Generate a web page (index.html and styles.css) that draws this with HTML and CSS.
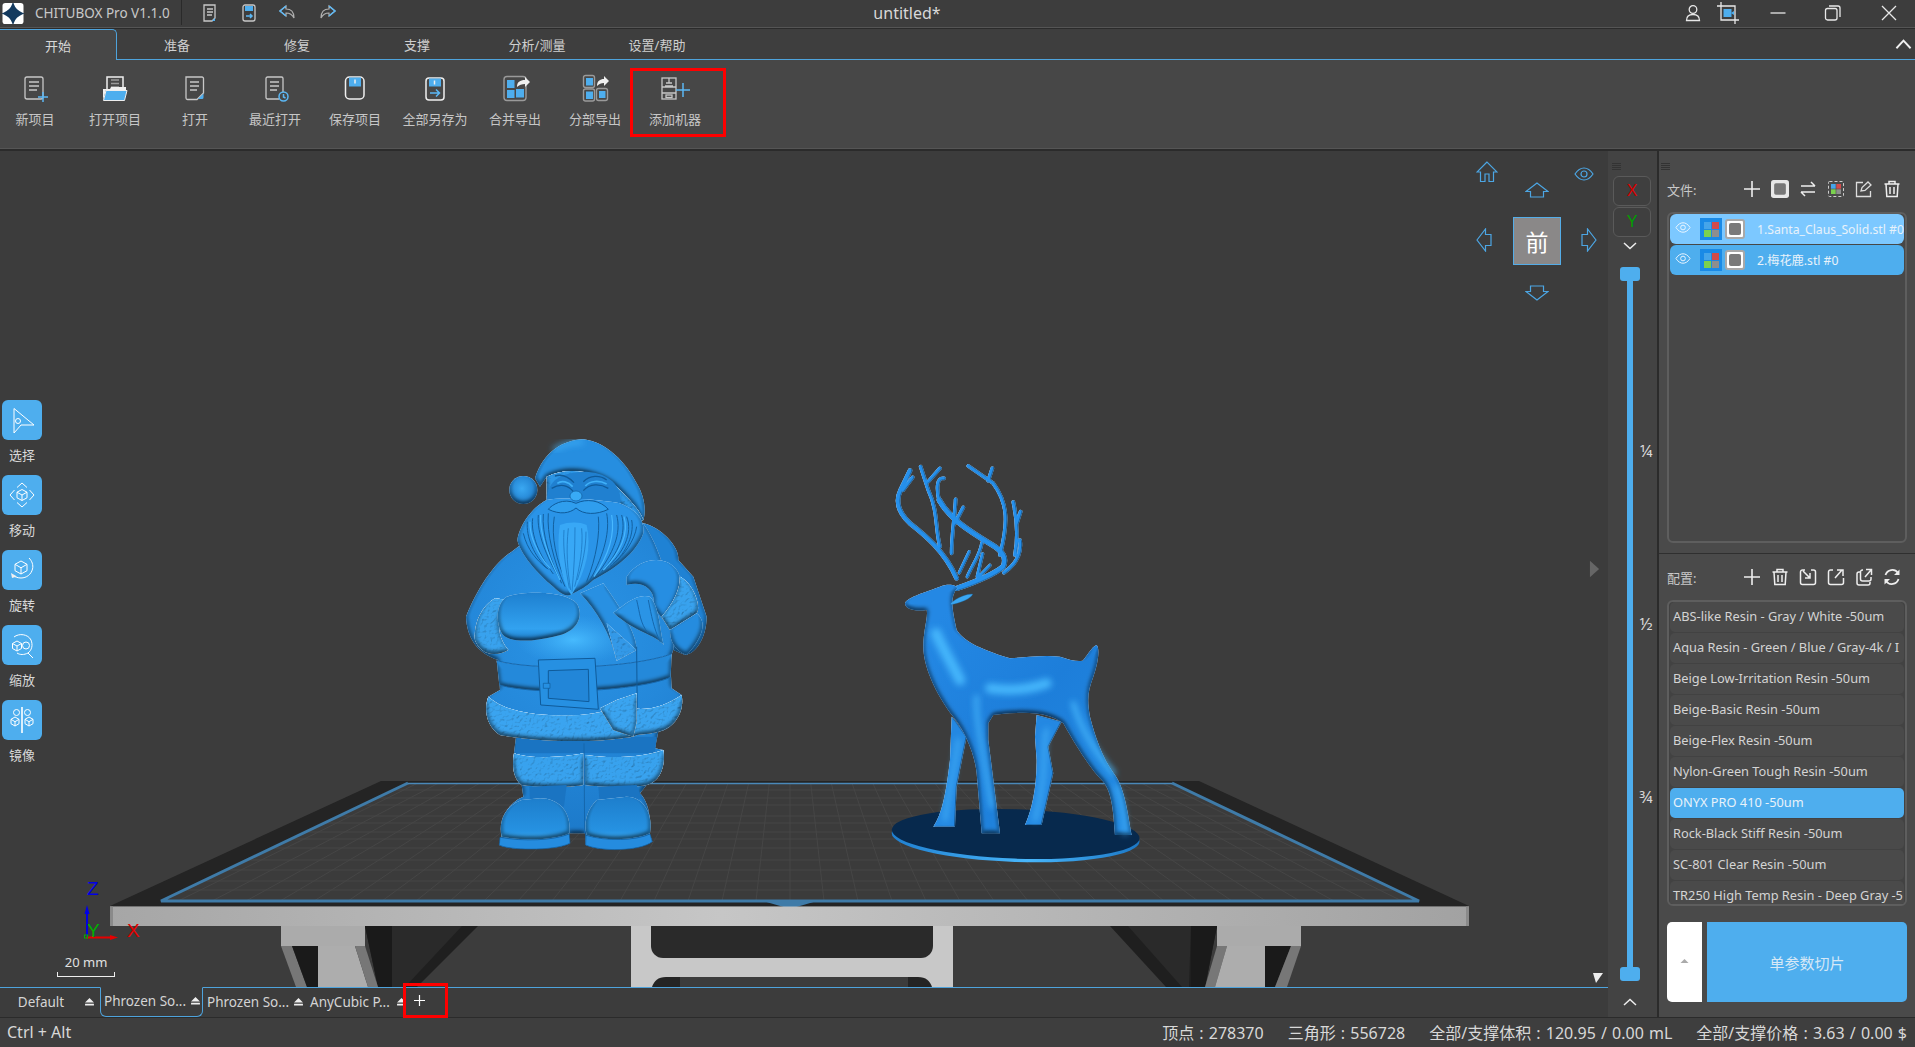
FILE: index.html
```html
<!DOCTYPE html>
<html lang="zh">
<head>
<meta charset="utf-8">
<title>CHITUBOX Pro</title>
<link rel="stylesheet" href="styles.css">
</head>
<body>
<svg class="defs" width="0" height="0" aria-hidden="true">
  <defs>
    <symbol id="eye" viewBox="0 0 20 14"><path d="M1 7C4 2.500 7 1 10 1s6 1.500 9 6c-3 4.500-6 6-9 6S4 11.500 1 7z" fill="none" stroke="currentColor" stroke-width="1.200"/><circle cx="10" cy="7" r="3" fill="none" stroke="currentColor" stroke-width="1.200"/></symbol>
    <symbol id="plus" viewBox="0 0 18 18"><path d="M9 1v16M1 9h16" fill="none" stroke="currentColor" stroke-width="1.600"/></symbol>
    <symbol id="trash" viewBox="0 0 18 18"><path d="M1.500 4h15M6 4V1.500h6V4M3 4l.8 12.500h10.400L15 4M7 7v7M11 7v7" fill="none" stroke="currentColor" stroke-width="1.500"/></symbol>
    <symbol id="eject" viewBox="0 0 10 9"><path d="M5 0l5 5H0zM0 6.500h10V8.500H0z" fill="currentColor"/></symbol>
    <symbol id="tiles" viewBox="0 0 16 16"><rect x="0" y="0" width="7.500" height="7.500" fill="#45a5ea"/><rect x="8.500" y="0" width="7.500" height="7.500" fill="#d24a4a"/><rect x="0" y="8.500" width="7.500" height="7.500" fill="#7bd14f"/><rect x="8.500" y="8.500" width="7.500" height="7.500" fill="#8e8e8e"/></symbol>
    <linearGradient id="bar" x1="0" x2="1" y1="0" y2="0"><stop offset="0" stop-color="#a6a6a6"/><stop offset=".45" stop-color="#c6c6c6"/><stop offset="1" stop-color="#a2a2a2"/></linearGradient>
    <radialGradient id="santa" gradientUnits="userSpaceOnUse" cx="400" cy="640" r="620"><stop offset="0" stop-color="#2a94e6"/><stop offset=".5" stop-color="#2488da"/><stop offset="1" stop-color="#1c79c9"/></radialGradient>
    <radialGradient id="glow" cx=".5" cy=".5" r=".5"><stop offset="0" stop-color="#48bcff" stop-opacity=".95"/><stop offset="1" stop-color="#3aa8f2" stop-opacity="0"/></radialGradient>
    <radialGradient id="ball" cx=".45" cy=".45" r=".6"><stop offset="0" stop-color="#3aa8f2"/><stop offset="1" stop-color="#1c79c9"/></radialGradient>
    <linearGradient id="mitt" x1="0" x2="0" y1="0" y2="1"><stop offset="0" stop-color="#1e80d0"/><stop offset=".75" stop-color="#32a2f0"/><stop offset="1" stop-color="#1c7cca"/></linearGradient>
    <linearGradient id="boot" x1="0" x2="0" y1="0" y2="1"><stop offset="0" stop-color="#1d7ecc"/><stop offset=".8" stop-color="#2692e2"/><stop offset="1" stop-color="#38aaf6"/></linearGradient>
    <linearGradient id="deer" gradientUnits="userSpaceOnUse" x1="180" y1="600" x2="760" y2="1100"><stop offset="0" stop-color="#2488e4"/><stop offset=".5" stop-color="#1d7eda"/><stop offset="1" stop-color="#2288e0"/></linearGradient>
    <linearGradient id="rim" x1="0" x2="1" y1="0" y2="0"><stop offset="0" stop-color="#2080d0"/><stop offset=".55" stop-color="#48b6fb"/><stop offset="1" stop-color="#1c78c6"/></linearGradient>
    <filter id="soft" x="-30%" y="-30%" width="160%" height="160%"><feGaussianBlur stdDeviation="10"/></filter>
    <filter id="puff" x="-5%" y="-5%" width="110%" height="110%" color-interpolation-filters="sRGB">
      <feGaussianBlur in="SourceAlpha" stdDeviation="8" result="b"/>
      <feDiffuseLighting in="b" surfaceScale="9" diffuseConstant="1.064" lighting-color="#fff" result="d"><feDistantLight azimuth="270" elevation="70"/></feDiffuseLighting>
      <feComposite in="d" in2="SourceAlpha" operator="in" result="d2"/>
      <feBlend in="SourceGraphic" in2="d2" mode="multiply"/>
    </filter>
    <filter id="puffs" x="-5%" y="-5%" width="110%" height="110%" color-interpolation-filters="sRGB">
      <feGaussianBlur in="SourceAlpha" stdDeviation="2" result="b"/>
      <feDiffuseLighting in="b" surfaceScale="2" diffuseConstant="1.064" lighting-color="#fff" result="d"><feDistantLight azimuth="200" elevation="70"/></feDiffuseLighting>
      <feComposite in="d" in2="SourceAlpha" operator="in" result="d2"/>
      <feBlend in="SourceGraphic" in2="d2" mode="multiply"/>
    </filter>
    <filter id="fur" x="0" y="0" width="100%" height="100%" color-interpolation-filters="sRGB"><feTurbulence type="fractalNoise" baseFrequency=".11" numOctaves="3" seed="4" result="n"/><feDiffuseLighting in="n" surfaceScale="2.400" lighting-color="#fff" diffuseConstant="1.150" result="l"><feDistantLight azimuth="235" elevation="62"/></feDiffuseLighting><feComposite in="l" in2="SourceAlpha" operator="in" result="t"/><feBlend in="SourceGraphic" in2="t" mode="multiply"/></filter>
    <clipPath id="bedclip"><polygon points="408,783 1172,783 1419,901 161,901"/></clipPath>
  </defs>
</svg>

<div class="app">
  <header class="titlebar">
    <svg class="logo" viewBox="0 0 22 22"><rect width="22" height="22" rx="3" fill="#fff"/><path d="M11 1.500C12.500 6 16 9 20.500 11 16 13 12.500 16 11 20.500 9.500 16 6 13 1.500 11 6 9 9.500 6 11 1.500z" fill="#143a5e" stroke="#143a5e" stroke-width="2"/></svg>
    <span class="appname">CHITUBOX Pro V1.1.0</span>
    <span class="title-sep"></span>
    <div class="quick">
      <svg class="quick-ic" viewBox="0 0 20 20"><path d="M4 2h11v13l-3 3H4z" class="ln"/><path d="M7 6h6M7 9h6M7 12h5" class="ln"/><path d="M12 18l3-3v3z" class="fb"/></svg>
      <svg class="quick-ic" viewBox="0 0 20 20"><rect x="4" y="2" width="12" height="16" rx="2" class="ln"/><rect x="6" y="3" width="8" height="5" class="fb"/><path d="M7 13h6M11 11l2 2-2 2" class="lb"/></svg>
      <svg class="quick-ic" viewBox="0 0 20 20"><path d="M8 3L2 8l6 5V10c4 0 6 1 8 5 0-6-3-9-8-9z" class="lg"/><path d="M8 3L2 8l6 5" class="lb"/></svg>
      <svg class="quick-ic" viewBox="0 0 20 20"><path d="M12 3l6 5-6 5V10c-4 0-6 1-8 5 0-6 3-9 8-9z" class="lg"/><path d="M12 3l6 5-6 5" class="lb"/></svg>
    </div>
    <div class="doc-title">untitled*</div>
    <div class="window-ctl">
      <svg class="win-ic user" viewBox="0 0 18 18"><circle cx="9" cy="5.500" r="3.800" class="ln"/><path d="M2.500 16.500c0-4 2.500-6 6.500-6s6.500 2 6.500 6z" class="ln"/></svg>
      <svg class="win-ic crop" viewBox="0 0 24 24"><path d="M5 1v18h18M1 5h18v18" class="ln"/><rect x="7.500" y="8" width="8" height="8" class="fb"/><path d="M15 12l3-2v4z" class="fb"/></svg>
      <svg class="win-ic min" viewBox="0 0 18 18"><path d="M1.500 9h15" class="ln"/></svg>
      <svg class="win-ic restore" viewBox="0 0 18 18"><rect x="1.500" y="4.500" width="11.500" height="11.500" rx="2" class="ln"/><path d="M5 2h9a2 2 0 0 1 2 2v9" class="ln"/></svg>
      <svg class="win-ic close" viewBox="0 0 18 18"><path d="M2 2l14 14M16 2L2 16" class="ln"/></svg>
    </div>
  </header>

  <nav class="tabs">
    <div class="tab tab-active">开始</div>
    <div class="tab">准备</div>
    <div class="tab">修复</div>
    <div class="tab">支撑</div>
    <div class="tab">分析/测量</div>
    <div class="tab">设置/帮助</div>
    <svg class="tabs-collapse" viewBox="0 0 18 12"><path d="M1.500 10.500L9 2.500l7.500 8" class="ln-w"/></svg>
  </nav>

  <section class="ribbon">
    <div class="rb">
      <svg class="rb-ic" viewBox="0 0 36 30"><rect x="8" y="3" width="18" height="22" rx="2" class="ln"/><path d="M12 8h10M12 12h10M12 16h8" class="ln"/><path d="M26 18v10M21 23h10" class="lb"/></svg>
      <span class="rb-label">新项目</span>
    </div>
    <div class="rb">
      <svg class="rb-ic" viewBox="0 0 36 30"><path d="M10 15V3h16v12" class="lw"/><path d="M14 6h8M14 9.500h8M14 13h8" class="lg2"/><path d="M6 15h7l1-2h15v3H9L6 26z" class="fw"/><path d="M9 16.500h21l-2.500 10H6.500z" class="fbw"/></svg>
      <span class="rb-label">打开项目</span>
    </div>
    <div class="rb">
      <svg class="rb-ic" viewBox="0 0 36 30"><path d="M9 3h16a1.500 1.500 0 0 1 1.500 1.500V19L20 25.500H10.500A1.500 1.500 0 0 1 9 24z" class="ln"/><path d="M13 8h9M13 12h9M13 16h7" class="ln"/><path d="M21 25l5.500-5.500v4a1.500 1.500 0 0 1-1.500 1.500z" class="fb"/></svg>
      <span class="rb-label">打开</span>
    </div>
    <div class="rb">
      <svg class="rb-ic" viewBox="0 0 36 30"><path d="M22 25H10.500A1.500 1.500 0 0 1 9 23.500v-19A1.500 1.500 0 0 1 10.500 3h14A1.500 1.500 0 0 1 26 4.500V18" class="ln"/><path d="M13 8h9M13 12h9M13 16h7" class="ln"/><circle cx="26.500" cy="22.500" r="4.500" class="lb"/><path d="M26.500 20v3l2 1" class="lb"/></svg>
      <span class="rb-label">最近打开</span>
    </div>
    <div class="rb">
      <svg class="rb-ic" viewBox="0 0 36 30"><rect x="8.500" y="3" width="18.500" height="22" rx="4" class="lw"/><rect x="12" y="3.500" width="12" height="9" class="fb"/><path d="M18 5.500v4" class="lw"/></svg>
      <span class="rb-label">保存项目</span>
    </div>
    <div class="rb">
      <svg class="rb-ic" viewBox="0 0 36 30"><rect x="9" y="4" width="18" height="22" rx="3" class="lw"/><rect x="12" y="4.500" width="12" height="8" class="fb"/><path d="M17.500 6.500v4" class="lw"/><path d="M13 19h9M19 15.500l3.500 3.500-3.500 3.500" class="lb"/></svg>
      <span class="rb-label">全部另存为</span>
    </div>
    <div class="rb">
      <svg class="rb-ic" viewBox="0 0 36 30"><rect x="7" y="2.500" width="22" height="24" rx="3" class="lg2"/><rect x="10" y="6" width="7.500" height="8" class="fb"/><rect x="10" y="16" width="7.500" height="8" class="fb"/><rect x="19" y="15" width="8" height="8.500" class="fb"/><path d="M20 13c0-5 3-7 8-7V3l5 5-5 5v-3c-3 0-6 1-8 3z" class="fw"/></svg>
      <span class="rb-label">合并导出</span>
    </div>
    <div class="rb">
      <svg class="rb-ic" viewBox="0 0 36 30"><rect x="6.500" y="1.500" width="11" height="12" rx="2" class="lg2"/><rect x="9" y="4" width="7" height="7.500" class="fb"/><rect x="6.500" y="15" width="11" height="12" rx="2" class="lg2"/><rect x="9" y="17.500" width="7" height="7.500" class="fb"/><rect x="19.500" y="14.500" width="11" height="12" rx="2" class="lg2"/><rect x="22" y="17" width="6.500" height="7" class="fb"/><path d="M20 12c0-5 3-7 7-7V2l5 5-5 5V9c-3 0-5 1-7 3z" class="fw"/></svg>
      <span class="rb-label">分部导出</span>
    </div>
    <div class="rb rb-marked">
      <svg class="rb-ic" viewBox="0 0 36 30"><rect x="5" y="4" width="14" height="21" class="ln"/><path d="M5 13h14M5 19h14M12 4v5M8 12h8M9 9h6" class="ln"/><rect x="9" y="21" width="6" height="2.500" class="ln"/><path d="M26 9v14M19 16h14" class="lb"/></svg>
      <span class="rb-label">添加机器</span>
    </div>
  </section>

  <main class="main">
    <div class="scene-col">
      <div class="viewport">
        <svg class="scene" viewBox="0 151 1608 836">
          <!-- build plate -->
          <polygon points="110,906 381,781 1199,781 1469,906" fill="#242424"/>
          <polygon points="408,783 1172,783 1419,901 161,901" fill="#3b3b3b"/>
          <g clip-path="url(#bedclip)" class="gridlines">
            <path d="M790 783v118M810.700 783l13.300 118M769.300 783l-13.300 118M831.300 783l26.700 118M748.700 783l-26.700 118M852 783l40 118M728 783l-40 118M872.700 783l53.300 118M707.300 783l-53.300 118M893.300 783l66.700 118M686.700 783l-66.700 118M914 783l80 118M666 783l-80 118M934.700 783l93.300 118M645.300 783l-93.300 118M955.300 783l106.700 118M624.700 783l-106.700 118M976 783l120 118M604 783l-120 118M996.700 783l133.300 118M583.300 783l-133.300 118M1017.300 783l146.700 118M562.700 783l-146.700 118M1038 783l160 118M542 783l-160 118M1058.700 783l173.300 118M521.300 783l-173.300 118M1079.300 783l186.700 118M500.700 783l-186.700 118M1100 783l200 118M480 783l-200 118M1120.700 783l213.300 118M459.300 783l-213.300 118M1141.300 783l226.700 118M438.700 783l-226.700 118M1162 783l240 118M418 783l-240 118"/>
            <path d="M100 790h1400M100 798h1400M100 805h1400M100 816h1400M100 823h1400M100 832h1400M100 839h1400M100 848h1400M100 860h1400M100 870h1400M100 881h1400M100 890h1400"/>
          </g>
          <path d="M1172 783L1419 901H161L408 783" fill="none" stroke="#3f7ba8" stroke-width="3"/>
          <path d="M408 783.500H1172" fill="none" stroke="#4a88b8" stroke-width="1.500"/>
          <polygon points="763,901 817,901 793,908 787,908" fill="#3f7ba8"/>
          <!-- supports -->
          <polygon points="365,926 478,926 417,987 378,987" fill="#1f1f1f"/>
          <polygon points="392,926 462,926 405,987 392,987" fill="#2a2a2a"/>
          <polygon points="1110,926 1217,926 1205,987 1166,987" fill="#1f1f1f"/>
          <polygon points="1128,926 1191,926 1189,987 1182,987" fill="#2a2a2a"/>
          <polygon points="1191,926 1217,926 1205,987 1191,987" fill="#1a1a1a"/>
          <polygon points="365,926 392,926 392,987 378,987" fill="#1a1a1a"/>
          <g>
            <rect x="281" y="926" width="84" height="20" fill="#ababab"/>
            <polygon points="281,946 292,946 307,987 296,987" fill="#777"/>
            <polygon points="292,946 318,946 318,987 307,987" fill="#1a1a1a"/>
            <polygon points="318,946 355,946 368,987 318,987" fill="#adadad"/>
            <polygon points="355,946 365,946 378,987 368,987" fill="#777"/>
          </g>
          <g>
            <rect x="1217" y="926" width="84" height="20" fill="#ababab"/>
            <polygon points="1217,946 1227,946 1215,987 1205,987" fill="#777"/>
            <polygon points="1227,946 1265,946 1265,987 1215,987" fill="#adadad"/>
            <polygon points="1265,946 1291,946 1275,987 1265,987" fill="#1a1a1a"/>
            <polygon points="1291,946 1301,946 1287,987 1275,987" fill="#777"/>
          </g>
          <rect x="631" y="926" width="322" height="61" fill="#c8c8c8"/>
          <path d="M651 926h282v20a12 12 0 0 1-12 12H663a12 12 0 0 1-12-12z" fill="#2a2a2a"/>
          <path d="M652 987c2-6 6-10 14-10h252c8 0 12 4 14 10z" fill="#242424"/>
          <rect x="680" y="977" width="228" height="10" fill="#3c3c3c"/>
          <rect x="110" y="906.500" width="1359" height="19.500" fill="url(#bar)"/>
          <rect x="110" y="906.500" width="3" height="19.500" fill="#8a8a8a"/>
          <rect x="1466" y="906.500" width="3" height="19.500" fill="#8a8a8a"/>

          <!-- santa -->
          <g transform="translate(440 420) scale(.3333)">
            <path d="M610 310C660 320 720 380 715 420L760 470 800 590C800 650 770 700 735 705L700 690z" fill="#1f82d4" filter="url(#puff)"/>
            <path d="M215 395C160 430 110 510 78 590 80 650 110 700 175 720L180 810 145 830C135 870 140 920 180 945L228 950 222 1000C215 1040 225 1085 245 1095L250 1130C200 1150 180 1200 185 1250L178 1275C200 1290 340 1295 390 1270L385 1240H435L437 1275C480 1295 600 1295 637 1265L628 1240C635 1180 620 1140 600 1120L620 1095C660 1085 675 1040 670 990L645 985 655 935C700 930 730 880 725 825L695 805 690 710C720 690 700 440 610 310L300 330z" fill="url(#santa)" filter="url(#puff)"/>
            <ellipse cx="400" cy="660" rx="170" ry="75" fill="url(#glow)"/>
            <path d="M230 950H650L645 1000H225z" fill="#1a74c2"/>
            <path d="M170 722C280 752 560 748 695 702L692 772C600 812 300 830 178 795z" fill="#2489da" filter="url(#puff)"/>
            <path d="M170 722C280 752 560 748 695 702M692 772C600 812 300 830 178 795" class="crease-lt"/>
            <path d="M420 520L490 490C540 560 590 640 590 690L530 722C510 640 470 570 420 520z" fill="#2890e2" filter="url(#puff)"/>
            <path d="M500 610L590 690 530 722z" fill="#3399e8" filter="url(#fur)"/>
            <path d="M590 680L592 905" class="crease"/>
            <path d="M295 720L465 715 475 868 302 855z" fill="#2690e2" stroke="#0f5a9a" stroke-width="3"/>
            <path d="M325 752L445 748 447 845 325 835z" fill="#2286d8" stroke="#0f5a9a" stroke-width="3"/>
            <path d="M310 790H330V805H310z" fill="#2690e2" stroke="#0f5a9a" stroke-width="2"/>
            <g filter="url(#puff)"><path d="M145 830C200 880 300 890 420 885 500 880 520 860 530 850 590 880 660 870 725 825 735 880 700 925 655 935 620 945 590 940 580 950 420 975 260 960 180 945 140 920 130 870 145 830z" fill="#3aa4f0" filter="url(#fur)"/></g>
            <g filter="url(#puff)"><path d="M480 865L530 840 590 820V905L580 950 520 930z" fill="#3aa4f0" filter="url(#fur)"/></g>
            <g filter="url(#puff)"><path d="M222 1000C280 1020 380 1010 430 1000V1095C360 1105 280 1100 245 1095 220 1075 215 1040 222 1000z" fill="#38a2ee" filter="url(#fur)"/></g>
            <g filter="url(#puff)"><path d="M435 1005C500 1015 600 1015 670 990 678 1040 660 1085 620 1095 560 1105 480 1100 435 1095z" fill="#38a2ee" filter="url(#fur)"/></g>
            <path d="M432 970L434 1240" class="crease-lt"/>
            <path d="M268 1100L380 1095 372 1160 270 1150z" fill="#1a74c2"/>
            <path d="M475 1100L590 1095 605 1135 480 1160z" fill="#1a74c2"/>
            <path d="M245 1140C190 1160 175 1210 185 1250 250 1262 340 1262 388 1240 395 1180 360 1135 300 1135z" fill="url(#boot)" filter="url(#puff)"/>
            <path d="M470 1140C440 1170 430 1210 440 1245 500 1265 590 1260 630 1240 640 1180 610 1130 560 1130z" fill="url(#boot)" filter="url(#puff)"/>
            <path d="M180 1252C250 1265 340 1262 388 1242L390 1270C340 1295 200 1290 178 1275z" fill="#258cdf" stroke="#0f5a9a" stroke-width="2"/>
            <path d="M438 1246C500 1265 590 1262 630 1242L637 1265C600 1295 480 1295 437 1275z" fill="#258cdf" stroke="#0f5a9a" stroke-width="2"/>
            <g filter="url(#puff)"><path d="M165 535C120 560 100 620 105 660 120 700 160 715 205 690 170 650 165 590 205 540z" fill="#38a2ee" filter="url(#fur)"/></g>
            <path d="M200 530C260 510 380 515 410 550 435 590 410 640 340 650 280 665 205 670 185 640 165 600 170 550 200 530z" fill="url(#mitt)" filter="url(#puff)"/>
            <path d="M560 470C600 410 680 405 710 450 740 490 700 560 670 600L640 560C650 510 610 480 560 495z" fill="#268ee2" filter="url(#puff)"/>
            <g filter="url(#puff)"><path d="M720 470C760 490 785 560 770 580L690 630 665 590C700 550 720 510 720 470z" fill="#38a2ee" filter="url(#fur)"/></g>
            <path d="M690 630L770 580C795 600 800 640 740 705 700 690 690 660 690 630z" fill="#258cdf" filter="url(#puff)"/>
            <path d="M520 578C560 550 590 520 630 530 660 560 660 640 672 675 640 640 590 640 520 578z" fill="#2a94e6" filter="url(#puff)"/>
            <path d="M590 540C600 580 600 610 625 640M625 540C635 590 640 620 660 665" class="crease-lt"/>
            <path d="M285 175C310 95 370 60 430 58 500 65 560 130 590 190 612 225 620 270 610 300 590 260 560 230 530 200 470 150 380 140 320 170L300 200z" fill="#268ee0" filter="url(#puff)"/>
            <g filter="url(#puff)"><path d="M320 170C380 140 470 150 530 200 570 240 600 270 610 300L590 310 540 250H320z" fill="#2c96e6" filter="url(#fur)"/></g>
            <path d="M340 90C370 72 400 66 430 66" fill="none" stroke="#3fb0f8" stroke-width="10" filter="url(#soft)"/>
            <circle cx="250" cy="210" r="42" fill="url(#ball)" filter="url(#puff)"/>
            <path d="M320 245C320 170 380 155 440 155 520 160 550 210 540 260 500 290 360 290 320 245z" fill="#2080d0"/>
            <path d="M335 205C360 190 385 195 400 215M430 212C450 190 480 190 505 205M345 168C365 162 385 170 402 188M430 185C450 165 480 165 500 180" class="crease-th"/>
            <path d="M352 190C365 180 385 185 398 200M436 198C450 182 478 180 500 192" class="hl"/>
            <path d="M320 240C280 260 240 310 232 360 240 400 290 460 340 500 360 520 380 530 390 525 420 510 440 500 460 480 520 450 590 400 610 340 615 300 590 270 540 250 480 240 380 230 320 240z" fill="#2a94e8" filter="url(#puff)"/>
            <path d="M262 305C258 350 282 410 325 448M278 295C272 345 298 405 340 462M295 285C290 340 320 410 355 470M310 282C305 340 330 420 365 490M325 280C320 340 340 420 375 500M343 290C333 350 348 420 380 490M530 285C545 340 520 400 470 465M545 285C560 340 535 400 485 455M560 290C580 340 550 400 498 445M575 300C585 350 550 410 510 440M590 320C585 360 550 410 520 430M500 280C510 330 495 400 450 480M475 290C480 340 470 410 440 485M250 340C262 390 290 420 320 445" class="strand"/>
            <path d="M270 305C268 345 290 400 330 445M302 285C298 340 325 410 360 480M552 290C568 340 540 400 490 450M515 285C525 340 510 400 462 470" class="strand-hl"/>
            <path d="M408 250C370 232 335 255 325 268 360 285 390 280 408 264 430 285 470 285 505 268 480 240 440 235 408 250z" fill="#2f9eee" stroke="#0f5a9a" stroke-width="3"/>
            <ellipse cx="408" cy="228" rx="18" ry="15" fill="#38aaf6" stroke="#0f5a9a" stroke-width="2"/>
            <path d="M360 315C385 305 420 305 440 315 455 380 440 450 395 525 370 500 345 400 360 315z" fill="#38a8f6"/>
            <path d="M372 330C368 390 378 450 388 505M385 325C378 390 382 450 392 510M405 322C405 390 402 450 396 515M425 325C430 380 420 440 404 500M438 335C438 385 428 430 412 480" class="strand-lt"/>
          </g>

          <!-- deer -->
          <g transform="translate(860 440) scale(.3333)">
            <ellipse cx="467" cy="1192" rx="372" ry="74" fill="url(#rim)" transform="rotate(2 467 1192)"/>
            <ellipse cx="467" cy="1182" rx="372" ry="74" fill="#07294d" transform="rotate(2 467 1182)"/>
            <g class="antler" filter="url(#puffs)">
              <path d="M290 415C255 335 195 285 150 250 118 220 105 185 122 150L150 92" stroke-width="14"/>
              <path d="M130 150L158 112M240 320C225 260 235 215 205 150L182 80M205 125L240 85M238 185C228 140 232 112 252 115M275 340C275 280 285 230 287 178M285 250L310 202" stroke-width="11"/>
              <path d="M292 445C350 425 400 405 430 380 442 350 425 335 405 320 340 280 270 240 238 180" stroke-width="16"/>
              <path d="M420 345C445 250 445 190 400 130L325 78M385 122L397 85M432 398C470 372 486 340 480 300M465 345C476 285 472 240 460 186M471 250L482 215" stroke-width="11"/>
              <path d="M298 398L328 335M322 410C340 370 360 345 366 308M352 410L368 342M355 412L390 376" stroke-width="10"/>
            </g>
            <path d="M285 840L320 890 290 1040 285 1160H220C240 1130 255 1090 270 960L275 830z" fill="#2488e2" filter="url(#puffs)"/>
            <path d="M530 825L605 845 565 920 580 1000 545 1155H495C515 1110 530 1050 530 960L525 890z" fill="#2488e2" filter="url(#puffs)"/>
            <path d="M135 490C140 475 170 465 240 440 265 430 290 435 292 445 270 470 275 500 290 570 310 600 350 625 450 655 510 650 560 645 600 650 630 660 650 665 668 662 680 650 695 620 710 615 720 625 715 670 700 710 685 750 680 775 690 830 705 890 730 960 765 1005 795 1045 805 1130 815 1185H765C760 1110 755 1050 725 1020 690 985 640 905 610 850 570 820 510 810 400 825L385 850 385 900 420 1180H365L350 1000C345 950 320 880 280 830 240 780 190 690 190 620 190 570 205 530 200 510 170 515 135 510 135 490z" fill="url(#deer)" filter="url(#puff)"/>
            <path d="M272 490C295 470 320 462 338 462 335 475 300 490 272 494z" fill="#3aa7f2" stroke="#1468aa" stroke-width="1"/>
            <g filter="url(#soft)" class="shine">
              <path d="M228 580C245 620 275 670 300 720" stroke-width="32"/>
              <path d="M390 745C440 752 500 752 560 730" stroke-width="30"/>
              <path d="M640 790C660 860 700 930 760 1000" stroke-width="14"/>
              <path d="M350 770C345 810 360 900 395 1100" stroke-width="12"/>
              <path d="M295 900C285 980 265 1060 255 1140" stroke-width="10"/>
              <path d="M560 870C545 920 565 1000 525 1140" stroke-width="10"/>
              <path d="M770 1040C790 1100 795 1140 795 1180" stroke-width="10"/>
            </g>
          </g>
        </svg>

        <div class="tools">
          <div class="tool">
            <div class="tool-btn"><svg viewBox="0 0 28 28" class="tool-ic"><path d="M6 2.500L26 19H13L6 27z" class="lw1"/><circle cx="10" cy="15" r="2.500" class="lw1"/></svg></div>
            <span class="tool-label">选择</span>
          </div>
          <div class="tool">
            <div class="tool-btn"><svg viewBox="0 0 28 28" class="tool-ic"><path d="M14 2l5 4.500M14 2L9 6.500M14 26l5-4.500M14 26l-5-4.500M2 14l4.500-5M2 14l4.500 5M26 14l-4.500-5M26 14l-4.500 5" class="lw1"/><path d="M14 8.500l5 2.700v5.600l-5 2.700-5-2.700v-5.600zM9 11.200l5 2.800 5-2.800M14 14v5.500" class="lw1"/></svg></div>
            <span class="tool-label">移动</span>
          </div>
          <div class="tool">
            <div class="tool-btn"><svg viewBox="0 0 28 28" class="tool-ic"><path d="M13 5l6 3.300v6.400l-6 3.300-6-3.300V8.300zM7 8.300l6 3.500 6-3.500M13 11.800V18" class="lw1"/><path d="M21 2c3 3 4.500 7 3.500 11-1.300 5.500-6 9-11.500 9-3 0-6-1-8-2.500" class="lw1"/><path d="M3 17l1 5 5-1.500z" class="fw"/></svg></div>
            <span class="tool-label">旋转</span>
          </div>
          <div class="tool">
            <div class="tool-btn"><svg viewBox="0 0 28 28" class="tool-ic"><path d="M9 10l4.500 2.500v5L9 20l-4.500-2.500v-5zM4.500 12.500L9 15l4.500-2.500M9 15v5" class="lw1"/><circle cx="18" cy="14.500" r="3.500" class="lw1"/><path d="M6 6c5-4 14-3 17 3 2 5 1 10-3 13-4 2-8 2-11 0M20 22l5 5" class="lw1"/></svg></div>
            <span class="tool-label">缩放</span>
          </div>
          <div class="tool">
            <div class="tool-btn"><svg viewBox="0 0 28 28" class="tool-ic"><path d="M14 1v26" class="lw2"/><path d="M7 11l4 2.300v4.400L7 20l-4-2.300v-4.400zM21 11l4 2.300v4.400L21 20l-4-2.300v-4.400zM3 13.300L7 15.700l4-2.400M17 13.300l4 2.400 4-2.400M7 15.700V20M21 15.700V20" class="lw1"/><circle cx="8.500" cy="6.500" r="3" class="lw1"/><circle cx="19.500" cy="6.500" r="3" class="lw1"/></svg></div>
            <span class="tool-label">镜像</span>
          </div>
        </div>

        <svg class="axes" viewBox="0 0 100 70">
          <path d="M37 28v27" stroke="#0000e6" stroke-width="2" fill="none"/>
          <path d="M37 22l-2.500 9h5z" fill="#0000e6"/>
          <path d="M36 54.500h28" stroke="#e60000" stroke-width="2" fill="none"/>
          <path d="M68 54.500l-8-2.500v5z" fill="#e60000"/>
          <rect x="34.500" y="52" width="3" height="3" fill="none" stroke="#00b000"/>
          <text x="37" y="12" class="ax-z">Z</text>
          <text x="37" y="54" class="ax-y">Y</text>
          <text x="77" y="54" class="ax-x">X</text>
        </svg>
        <div class="scale">
          <span class="scale-text">20 mm</span>
          <span class="scale-bar"></span>
        </div>

        <div class="navcube">
          <svg class="nav-a nav-home" viewBox="0 0 22 22"><path d="M11 1L1 11h3.500v9.500h4.500V13h4v7.500h4.500V11H21z" class="lb1"/></svg>
          <svg class="nav-a nav-up" viewBox="0 0 24 16"><path d="M12 1L1 9.500h4.500V15h13V9.500H23z" class="lb1"/></svg>
          <svg class="nav-a nav-eye" viewBox="0 0 20 14"><use href="#eye"/></svg>
          <svg class="nav-a nav-left" viewBox="0 0 16 24"><path d="M1 12L9.500 1v5.500H15v11H9.500V23z" class="lb1"/></svg>
          <div class="nav-front">前</div>
          <svg class="nav-a nav-right" viewBox="0 0 16 24"><path d="M15 12L6.500 1v5.500H1v11h5.500V23z" class="lb1"/></svg>
          <svg class="nav-a nav-down" viewBox="0 0 24 16"><path d="M12 15L1 6.500h4.500V1h13v5.500H23z" class="lb1"/></svg>
        </div>

        <svg class="side-arrow" viewBox="0 0 12 20"><path d="M1 1l10 9-10 9z"/></svg>
        <svg class="corner-arrow" viewBox="0 0 10 10"><path d="M0 0h10L3 10z"/></svg>
      </div>

      <div class="doc-tabs">
        <div class="doc-tab doc-first"><span class="doc-name">Default</span><svg class="ej" viewBox="0 0 10 9"><use href="#eject"/></svg></div>
        <div class="doc-tab doc-active"><span class="doc-name">Phrozen So...</span><svg class="ej" viewBox="0 0 10 9"><use href="#eject"/></svg></div>
        <div class="doc-tab"><span class="doc-name">Phrozen So...</span><svg class="ej" viewBox="0 0 10 9"><use href="#eject"/></svg></div>
        <div class="doc-tab"><span class="doc-name">AnyCubic P...</span><svg class="ej" viewBox="0 0 10 9"><use href="#eject"/></svg></div>
        <div class="doc-add"><svg class="doc-plus" viewBox="0 0 12 12"><path d="M6 0v12M0 6h12" stroke="#fff" stroke-width="1.300" fill="none"/></svg></div>
      </div>
    </div>

    <aside class="slider-panel">
      <svg class="grip" viewBox="0 0 11 7"><path d="M0 .500h9M0 2.500h9M0 4.500h9M0 6.500h9" stroke="#333" stroke-width="1"/></svg>
      <button class="axis-btn axis-x">X</button>
      <button class="axis-btn axis-y">Y</button>
      <svg class="chev" viewBox="0 0 14 8"><path d="M1 1l6 5.500L13 1" class="ln-w1"/></svg>
      <div class="slider">
        <span class="handle"></span>
        <span class="track"></span>
        <span class="handle"></span>
        <span class="frac frac-1">¼</span>
        <span class="frac frac-2">½</span>
        <span class="frac frac-3">¾</span>
      </div>
      <svg class="chev chev-up" viewBox="0 0 14 8"><path d="M1 7L7 1.500 13 7" class="ln-w1"/></svg>
    </aside>

    <aside class="right-panel">
      <svg class="grip grip-r" viewBox="0 0 11 7"><path d="M0 .500h9M0 2.500h9M0 4.500h9M0 6.500h9" stroke="#333" stroke-width="1"/></svg>
      <div class="panel-head">
        <span class="panel-title">文件:</span>
        <div class="panel-icons">
          <svg class="pi" viewBox="0 0 18 18"><use href="#plus"/></svg>
          <svg class="pi" viewBox="0 0 20 20"><rect x="0" y="0" width="20" height="20" rx="3" fill="#e8e8e8"/><rect x="3.500" y="3.500" width="13" height="13" rx="2" fill="#777"/></svg>
          <svg class="pi" viewBox="0 0 18 18"><path d="M2 6h14M12 2l4 4M16 12H2M6 16l-4-4" class="ln-w1"/></svg>
          <svg class="pi" viewBox="0 0 18 18"><rect x="1.500" y="1.500" width="15" height="15" rx="1" fill="none" stroke="#ccc" stroke-dasharray="3 2"/><use href="#tiles" x="4" y="4" width="10" height="10"/></svg>
          <svg class="pi" viewBox="0 0 18 18"><path d="M15.500 11v5.500h-14v-14H8" fill="none" stroke="#ddd" stroke-width="1.300"/><path d="M6 11l1-3.500L13 2l3 3-6 5.500z" fill="none" stroke="#ddd" stroke-width="1.300"/></svg>
          <svg class="pi" viewBox="0 0 18 18"><use href="#trash"/></svg>
        </div>
      </div>
      <div class="file-list">
        <div class="file-row file-row-light">
          <svg class="file-eye" viewBox="0 0 20 14"><use href="#eye"/></svg>
          <span class="tile"><svg class="tile-ic" viewBox="0 0 16 16"><use href="#tiles"/></svg></span>
          <span class="check"><span class="check-in"></span></span>
          <span class="file-name">1.Santa_Claus_Solid.stl #0</span>
        </div>
        <div class="file-row">
          <svg class="file-eye" viewBox="0 0 20 14"><use href="#eye"/></svg>
          <span class="tile"><svg class="tile-ic" viewBox="0 0 16 16"><use href="#tiles"/></svg></span>
          <span class="check"><span class="check-in"></span></span>
          <span class="file-name">2.梅花鹿.stl #0</span>
        </div>
      </div>
      <div class="panel-head panel-head-cfg">
        <span class="panel-title">配置:</span>
        <div class="panel-icons">
          <svg class="pi" viewBox="0 0 18 18"><use href="#plus"/></svg>
          <svg class="pi" viewBox="0 0 18 18"><use href="#trash"/></svg>
          <svg class="pi" viewBox="0 0 18 18"><path d="M6 2H3.500a2 2 0 0 0-2 2v10.500a2 2 0 0 0 2 2h11a2 2 0 0 0 2-2V4a2 2 0 0 0-2-2H12M4 3l6.500 6.500M11 5v5H6" class="ln-w1"/></svg>
          <svg class="pi" viewBox="0 0 18 18"><path d="M6 2H3.500a2 2 0 0 0-2 2v10.500a2 2 0 0 0 2 2h11a2 2 0 0 0 2-2V10M8 10l7-8M10 2h6v6" class="ln-w1"/></svg>
          <svg class="pi" viewBox="0 0 18 18"><path d="M5 4H4a2 2 0 0 0-2 2v9a2 2 0 0 0 2 2h9a2 2 0 0 0 2-2v-1M8 2h-.500a2 2 0 0 0-2 2v7a2 2 0 0 0 2 2H14a2 2 0 0 0 2-2V9M10 9l6-7M11 1.500h5.500V7" class="ln-w1"/></svg>
          <svg class="pi" viewBox="0 0 18 18"><path d="M2.500 7A7 7 0 0 1 15 5M15.500 11A7 7 0 0 1 3 13" fill="none" stroke="#eee" stroke-width="1.800"/><path d="M16.500 1.500V7h-5.500zM1.500 16.500V11H7z" fill="#eee"/></svg>
        </div>
      </div>
      <div class="cfg-list">
        <div class="cfg-row">ABS-like Resin - Gray / White -50um</div>
        <div class="cfg-row">Aqua Resin - Green / Blue / Gray-4k / I</div>
        <div class="cfg-row">Beige Low-Irritation Resin -50um</div>
        <div class="cfg-row">Beige-Basic Resin -50um</div>
        <div class="cfg-row">Beige-Flex Resin -50um</div>
        <div class="cfg-row">Nylon-Green Tough Resin -50um</div>
        <div class="cfg-row cfg-selected">ONYX PRO 410 -50um</div>
        <div class="cfg-row">Rock-Black Stiff Resin -50um</div>
        <div class="cfg-row">SC-801 Clear Resin -50um</div>
        <div class="cfg-row cfg-last">TR250 High Temp Resin - Deep Gray -5</div>
      </div>
      <div class="slice-row">
        <button class="slice-more"><svg class="slice-tri" viewBox="0 0 10 5"><path d="M5 0l5 5H0z"/></svg></button>
        <button class="slice-btn">单参数切片</button>
      </div>
    </aside>
  </main>

  <footer class="status">
    <span class="status-keys">Ctrl + Alt</span>
    <div class="status-stats">
      <span>顶点 : 278370</span>
      <span>三角形 : 556728</span>
      <span>全部/支撑体积 : 120.95 / 0.00 mL</span>
      <span>全部/支撑价格 : 3.63 / 0.00 $</span>
    </div>
  </footer>
</div>
</body>
</html>
```

FILE: styles.css
```css
*, *::after { box-sizing: border-box; }
html, body { margin: 0; padding: 0; width: 100%; height: 100%; overflow: hidden; background: #3c3c3c; }
body { font-family: "Noto Sans", "Noto Sans CJK SC", "Liberation Sans", sans-serif; font-size: 13px; color: #d0d0d0; }
.defs { position: absolute; }

.app { display: flex; flex-direction: column; width: 1915px; height: 1047px; }

/* shared icon strokes */
.ln { fill: none; stroke: #c8c8c8; stroke-width: 1.3; }
.ln-w { fill: none; stroke: #f0f0f0; stroke-width: 2; }
.ln-w1 { fill: none; stroke: #eee; stroke-width: 1.5; }
.lw { fill: none; stroke: #efefef; stroke-width: 1.5; }
.lw1 { fill: none; stroke: #fff; stroke-width: 1; }
.lw2 { fill: none; stroke: #fff; stroke-width: 1.6; }
.lg { fill: none; stroke: #b0b0b0; stroke-width: 1.2; }
.lg2 { fill: none; stroke: #9a9a9a; stroke-width: 1.4; }
.lb { fill: none; stroke: #5cb8f5; stroke-width: 1.5; }
.lb1 { fill: none; stroke: #4ca6e4; stroke-width: 1.2; }
.fb { fill: #4eaeee; stroke: none; }
.fw { fill: #f0f0f0; stroke: none; }
.fbw { fill: #4eaeee; stroke: #eee; stroke-width: 1; }

/* title bar */
.titlebar { position: relative; display: flex; align-items: center; height: 29px; flex: none; padding: 0 0 2px 2px; background: #3d3d3d; border-bottom: 1px solid #2b2b2b; box-shadow: inset 0 -1px 0 #555; }
.logo { width: 22px; height: 21px; flex: none; }
.appname { margin-left: 11px; font-size: 13.5px; color: #c8c8c8; white-space: nowrap; width: 136px; }
.title-sep { width: 1px; height: 26px; margin: -2px 0 0 10px; background: #2a2a2a; }
.quick { display: flex; gap: 19px; margin-left: 18px; }
.quick-ic { width: 20px; height: 20px; }
.doc-title { position: absolute; left: 0; right: 101px; top: 1px; text-align: center; font-size: 16px; line-height: 24px; color: #d8d8d8; }
.window-ctl { position: absolute; inset: 0; pointer-events: none; }
.win-ic { position: absolute; top: 4px; width: 18px; height: 18px; }
.win-ic .ln { stroke: #e8e8e8; }
.user { left: 1684px; }
.crop { left: 1716px; top: 1px; width: 24px; height: 24px; }
.min { left: 1769px; }
.restore { left: 1824px; }
.close { left: 1880px; width: 18px; }

/* ribbon tabs */
.tabs { position: relative; display: flex; align-items: stretch; flex: none; height: 31px; background: #3e3e3e; border-bottom: 1px solid #4ea3dc; }
.tab { display: flex; align-items: center; justify-content: center; width: 120px; font-size: 13px; color: #cfcfcf; }
.tab-active { width: 117px; height: 31px; background: #474747; border: 1px solid #4ea3dc; border-left: none; border-bottom: none; border-top-right-radius: 5px; color: #d8d8d8; }
.tabs-collapse { position: absolute; right: 3px; top: 9px; width: 17px; height: 12px; }

/* ribbon */
.ribbon { display: flex; gap: 10px; flex: none; height: 91px; padding-top: 14px; background: #474747; border-bottom: 2px solid #2b2b2b; box-shadow: inset 0 -1px 0 #555; }
.rb { position: relative; display: flex; flex-direction: column; align-items: center; width: 70px; }
.rb-ic { width: 36px; height: 30px; }
.rb-label { margin-top: 5px; line-height: 21px; font-size: 13px; color: #c6c6c6; white-space: nowrap; }
.rb-marked::after { content: ""; position: absolute; left: -10px; top: -6px; width: 96px; height: 69px; border: 3px solid #f00; }

/* main */
.main { display: flex; flex: 1; min-height: 0; }
.scene-col { display: flex; flex-direction: column; width: 1608px; flex: none; }
.viewport { position: relative; flex: 1; min-height: 0; background: #3c3c3c; overflow: hidden; }
.scene { position: absolute; inset: 0; width: 100%; height: 100%; display: block; }
.gridlines path { fill: none; stroke: #464646; stroke-width: 1; }
.crease { fill: none; stroke: #0f5a9a; stroke-width: 3; }
.crease-lt { fill: none; stroke: #1566ac; stroke-width: 3; }
.crease-th { fill: none; stroke: #0f5a9a; stroke-width: 4; }
.hl { fill: none; stroke: #3fb0f8; stroke-width: 5; }
.strand { fill: none; stroke: #125f9f; stroke-width: 3; }
.strand-hl { fill: none; stroke: #48b8ff; stroke-width: 3.5; }
.strand-lt { fill: none; stroke: #1c78c4; stroke-width: 2.5; }
.antler path { fill: none; stroke: #2590ec; stroke-linecap: round; stroke-linejoin: round; }
.shine path { fill: none; stroke: #45b5fb; stroke-linecap: round; }

/* left tools */
.tools { position: absolute; left: 2px; top: 249px; display: flex; flex-direction: column; gap: 7px; }
.tool { display: flex; flex-direction: column; align-items: center; width: 40px; }
.tool-btn { display: flex; align-items: center; justify-content: center; width: 40px; height: 40px; background: #4eaeee; border-radius: 6px; }
.tool-ic { width: 28px; height: 28px; }
.tool-label { margin-top: 2px; line-height: 26px; font-size: 13px; color: #d8d8d8; height: 26px; }

/* axes + scale */
.axes { position: absolute; left: 50px; top: 732px; width: 100px; height: 70px; overflow: visible; }
.axes text { font-size: 19px; font-family: "Liberation Sans", sans-serif; }
.ax-z { fill: #0000e6; }
.ax-y { fill: #00b000; }
.ax-x { fill: #e60000; }
.scale { position: absolute; left: 57px; top: 802px; display: flex; flex-direction: column; align-items: center; width: 58px; }
.scale-text { font-size: 13px; line-height: 18px; color: #e0e0e0; white-space: nowrap; }
.scale-bar { width: 58px; height: 5px; margin-top: 1px; border: 1px solid #eee; border-top: none; }

/* nav cube */
.navcube { position: absolute; left: 1472px; top: 10px; width: 130px; height: 145px; }
.nav-a { position: absolute; color: #4ca6e4; }
.nav-home { left: 4px; top: 0; width: 22px; height: 22px; }
.nav-up { left: 53px; top: 21px; width: 24px; height: 16px; }
.nav-eye { left: 102px; top: 6px; width: 20px; height: 14px; }
.nav-left { left: 4px; top: 67px; width: 16px; height: 24px; }
.nav-right { left: 109px; top: 67px; width: 16px; height: 24px; }
.nav-down { left: 53px; top: 124px; width: 24px; height: 16px; }
.nav-front { position: absolute; left: 41px; top: 56px; width: 48px; height: 48px; display: flex; align-items: center; justify-content: center; background: #8a8888; border: 1px solid #54ade8; color: #fff; font-size: 23px; font-family: "Noto Sans CJK SC", sans-serif; }

.side-arrow { position: absolute; left: 1589px; top: 408px; width: 11px; height: 20px; fill: #666; }
.corner-arrow { position: absolute; left: 1593px; top: 822px; width: 10px; height: 10px; fill: #eee; }

/* document tabs */
.doc-tabs { position: relative; display: flex; flex: none; height: 30px; background: #3c3c3c; border-top: 1px solid #4ea3dc; }
.doc-tab { display: flex; align-items: center; width: 103px; padding: 0 0 2px 4px; font-size: 13.5px; color: #d4d4d4; }
.doc-first { width: 100px; padding-left: 0; }
.doc-first .doc-name { text-align: center; width: 82px; }
.doc-name { width: 84px; white-space: nowrap; }
.ej { width: 9px; height: 8px; margin-left: 3px; color: #eee; flex: none; }
.doc-active { height: 30px; margin-top: -1px; width: 103px; background: #3c3c3c; border: 1px solid #4ea3dc; border-top: 1px solid #3c3c3c; border-radius: 0 0 6px 6px; padding-left: 3px; }
.doc-add { position: relative; display: flex; align-items: center; width: 45px; height: 35px; margin: -5px 0 0 -6px; padding-left: 8px; border: 3px solid #f00; z-index: 2; }
.doc-plus { width: 11px; height: 11px; }

/* slider panel */
.slider-panel { position: relative; z-index: 1; display: flex; flex-direction: column; align-items: center; width: 51px; flex: none; padding-right: 5px; background: #434343; border-right: 2px solid #2b2b2b; }
.grip { width: 11px; height: 7px; flex: none; }
.slider-panel > .grip { align-self: flex-start; margin: 12px 0 6px 4px; }
.axis-btn { width: 38px; height: 30px; flex: none; margin: 0 0 1px 4px; padding: 0; background: #3f3f3f; border: 1px solid #5a5a5a; border-radius: 6px; font-family: "Liberation Sans", sans-serif; font-size: 16px; }
.axis-x { color: #d80000; }
.axis-y { color: #00a000; }
.chev { width: 14px; height: 8px; flex: none; margin-top: 4px; }
.slider { position: relative; display: flex; flex-direction: column; align-items: center; width: 20px; height: 714px; margin-top: 17px; flex: none; }
.handle { display: block; width: 20px; height: 14px; flex: none; background: #4eaeee; border-radius: 3px; }
.track { display: block; flex: 1; width: 6px; background: #4eaeee; }
.frac { position: absolute; left: 16px; width: 20px; text-align: center; font-size: 17px; line-height: 20px; color: #d8d8d8; transform: translateY(-50%); }
.frac-1 { top: 25.8%; }
.frac-2 { top: 50%; }
.frac-3 { top: 74.2%; }
.chev-up { margin-top: 17px; }

/* right panel */
.right-panel { position: relative; width: 256px; flex: none; padding: 0 8px; background: #4a4a4a; }
.grip-r { position: absolute; left: 2px; top: 12px; }
.panel-head { display: flex; align-items: center; justify-content: space-between; height: 61px; padding: 15px 6px 0 0; font-size: 13px; }
.panel-title { color: #c8c8c8; }
.panel-icons { display: flex; align-items: center; gap: 10px; }
.pi { width: 18px; height: 18px; color: #eee; flex: none; }
.file-list { display: flex; flex-direction: column; gap: 1px; height: 331px; padding: 0 1px; background: #474747; border: 2px solid #5e5e5e; border-radius: 6px; overflow: hidden; }
.file-row { display: flex; align-items: center; height: 30px; flex: none; background: #4eaeee; border-radius: 6px; color: #e8f2fa; font-size: 12.2px; white-space: nowrap; overflow: hidden; }
.file-row-light { background: #7cc8ff; }
.file-eye { width: 16px; height: 11px; margin: -3px 0 0 5px; color: #f0f8ff; flex: none; }
.tile { display: flex; align-items: center; justify-content: center; width: 22px; height: 22px; margin-left: 9px; background: #1a8ae6; flex: none; }
.tile-ic { width: 15px; height: 15px; }
.check { display: flex; align-items: center; justify-content: center; width: 20px; height: 20px; margin-left: 3px; background: #fff; border: 2px solid #a8a8a8; border-radius: 3px; flex: none; }
.check-in { display: block; width: 12px; height: 12px; background: #7a7a7a; border-radius: 2px; }
.file-name { margin-left: 12px; }
.panel-head-cfg { height: 47px; margin: 10px -8px 0; padding: 0 14px 0 8px; border-top: 1px solid #2f2f2f; }
.cfg-list { display: flex; flex-direction: column; gap: 1px; height: 306px; padding: 0 1px; background: #424242; border: 2px solid #5e5e5e; border-radius: 6px; overflow: hidden; }
.cfg-row { height: 30px; flex: none; padding: 0 3px; line-height: 29px; font-size: 12.8px; color: #d4d4d4; background: #4a4a4a; border-radius: 5px; white-space: nowrap; overflow: hidden; }
.cfg-selected { background: #4eaeee; color: #e8f2fa; }
.slice-row { display: flex; gap: 5px; height: 80px; margin: 16px 0 0; }
.slice-more { display: flex; align-items: center; justify-content: center; width: 35px; padding: 0 0 3px; background: #fff; border: none; border-radius: 5px 0 0 5px; }
.slice-tri { width: 9px; height: 4px; fill: #aaa; }
.slice-btn { flex: 1; padding: 0; background: #4eaeee; border: none; border-radius: 0 5px 5px 0; color: #d6e8f6; font-family: "Noto Sans CJK SC", sans-serif; font-size: 15px; }

/* status */
.status { display: flex; align-items: center; justify-content: space-between; flex: none; height: 30px; padding: 0 8px 2px 7px; background: #3e3e3e; border-top: 1px solid #2b2b2b; font-size: 16px; color: #d8d8d8; word-spacing: 1px; }
.status-keys { word-spacing: 0; }
.status-stats { display: flex; gap: 24px; }
```
